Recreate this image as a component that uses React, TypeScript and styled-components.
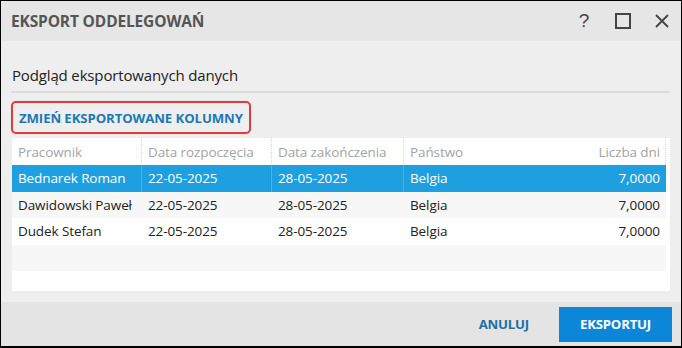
import React, { FC } from "react";
import styled, { createGlobalStyle } from "styled-components";

const GlobalStyle = createGlobalStyle`
  html, body {
    margin: 0;
    padding: 0;
    background: #ffffff;
  }
  * {
    box-sizing: border-box;
  }
`;

type Row = {
  employee: string;
  start: string;
  end: string;
  country: string;
  days: string;
};

const rows: Row[] = [
  { employee: "Bednarek Roman", start: "22-05-2025", end: "28-05-2025", country: "Belgia", days: "7,0000" },
  { employee: "Dawidowski Paweł", start: "22-05-2025", end: "28-05-2025", country: "Belgia", days: "7,0000" },
  { employee: "Dudek Stefan", start: "22-05-2025", end: "28-05-2025", country: "Belgia", days: "7,0000" },
];

const columns = "130px 130px 132px 130px 1fr";

const Window = styled.div`
  width: 682px;
  height: 348px;
  border: 1px solid #000;
  border-bottom-width: 2px;
  display: flex;
  flex-direction: column;
  background: #eeeeee;
  font-family: "Open Sans", "Noto Sans", sans-serif;
`;

const TitleBar = styled.div`
  height: 40px;
  flex-shrink: 0;
  background: #e6e6e6;
  display: flex;
  align-items: center;
  padding: 0 9px 0 10px;
`;

const Title = styled.div`
  flex: 1;
  font-size: 15.5px;
  font-weight: 700;
  color: #555555;
  letter-spacing: -0.15px;
`;

const TitleActions = styled.div`
  display: flex;
  align-items: center;
  gap: 19px;
`;

const TitleButton = styled.button`
  width: 20px;
  height: 20px;
  padding: 0;
  border: none;
  background: transparent;
  display: flex;
  align-items: center;
  justify-content: center;
  color: #444;
  font-family: "Liberation Sans", sans-serif;
  font-size: 19px;
  cursor: pointer;
`;

const Body = styled.div`
  flex: 1;
  padding: 24px 11px 11px 10px;
  display: flex;
  flex-direction: column;
  min-height: 0;
`;

const Subtitle = styled.div`
  font-size: 15px;
  line-height: 20px;
  color: #222;
  letter-spacing: -0.15px;
  padding-left: 1px;
  padding-bottom: 6px;
  border-bottom: 2px solid #dcdcdc;
`;

const ChangeColumns = styled.button`
  align-self: flex-start;
  margin-top: 8px;
  height: 33px;
  padding: 0 6px;
  border: 2px solid #e23a3a;
  border-radius: 5px;
  background: transparent;
  box-shadow: 0 0 1px rgba(120, 0, 0, 0.25);
  font-family: inherit;
  font-size: 13.2px;
  font-weight: 700;
  color: #1b79b5;
  letter-spacing: -0.1px;
  cursor: pointer;
`;

const Table = styled.div`
  margin-top: 4px;
  margin-left: 1px;
  flex: 1;
  min-height: 0;
  overflow: hidden;
  background: #ffffff;
  padding-right: 4px;
  font-size: 13.5px;
  letter-spacing: -0.1px;
`;

const HeaderRow = styled.div`
  display: grid;
  grid-template-columns: ${columns};
  height: 27px;
`;

const HeaderCell = styled.div<{ $right?: boolean; $noLine?: boolean }>`
  display: flex;
  align-items: center;
  justify-content: ${(p) => (p.$right ? "flex-end" : "flex-start")};
  padding: 0 5px 0 6px;
  color: #a3a3a3;
  border-right: 1px dotted ${(p) => (p.$noLine ? "transparent" : "#d6d6d6")};
`;

const DataRow = styled.div<{ $selected?: boolean; $odd?: boolean }>`
  display: grid;
  grid-template-columns: ${columns};
  height: 26.5px;
  background: ${(p) => (p.$selected ? "#1ea0e0" : p.$odd ? "#f7f7f7" : "#ffffff")};
  color: ${(p) => (p.$selected ? "#ffffff" : "#222222")};
`;

const Cell = styled.div<{ $right?: boolean; $line?: boolean }>`
  display: flex;
  align-items: center;
  justify-content: ${(p) => (p.$right ? "flex-end" : "flex-start")};
  padding: 0 5px 0 6px;
  white-space: nowrap;
  border-right: 1px solid ${(p) => (p.$line ? "#4ab3e6" : "transparent")};
`;

const Footer = styled.div`
  height: 44px;
  flex-shrink: 0;
  background: #e4e4e4;
  display: flex;
  align-items: center;
  justify-content: flex-end;
  padding: 0 9px 0 0;
  gap: 30px;
`;

const FooterButton = styled.button<{ $primary?: boolean }>`
  height: 35px;
  min-width: ${(p) => (p.$primary ? "113px" : "auto")};
  padding: 0 ${(p) => (p.$primary ? "14px" : "0")};
  border: none;
  background: ${(p) => (p.$primary ? "#0b86d8" : "transparent")};
  color: ${(p) => (p.$primary ? "#ffffff" : "#1f6fa6")};
  font-family: inherit;
  font-size: 13.2px;
  font-weight: 700;
  letter-spacing: -0.2px;
  cursor: pointer;
`;

const App: FC = () => {
  const blanks = 3;
  return (
    <>
      <GlobalStyle />
      <Window>
        <TitleBar>
          <Title>EKSPORT ODDELEGOWAŃ</Title>
          <TitleActions>
            <TitleButton aria-label="Pomoc">?</TitleButton>
            <TitleButton aria-label="Maksymalizuj">
              <svg width="16" height="16" viewBox="0 0 16 16">
                <rect x="1" y="1" width="14" height="14" fill="none" stroke="#444" strokeWidth="2" />
              </svg>
            </TitleButton>
            <TitleButton aria-label="Zamknij">
              <svg width="16" height="16" viewBox="0 0 16 16">
                <path d="M2 2 L14 14 M14 2 L2 14" stroke="#444" strokeWidth="1.8" />
              </svg>
            </TitleButton>
          </TitleActions>
        </TitleBar>
        <Body>
          <Subtitle>Podgląd eksportowanych danych</Subtitle>
          <ChangeColumns>ZMIEŃ EKSPORTOWANE KOLUMNY</ChangeColumns>
          <Table>
            <HeaderRow>
              <HeaderCell>Pracownik</HeaderCell>
              <HeaderCell>Data rozpoczęcia</HeaderCell>
              <HeaderCell>Data zakończenia</HeaderCell>
              <HeaderCell $noLine>Państwo</HeaderCell>
              <HeaderCell $right>Liczba dni</HeaderCell>
            </HeaderRow>
            {rows.map((r, i) => {
              const sel = i === 0;
              return (
                <DataRow key={r.employee} $selected={sel} $odd={i % 2 === 1}>
                  <Cell $line={sel}>{r.employee}</Cell>
                  <Cell $line={sel}>{r.start}</Cell>
                  <Cell $line={sel}>{r.end}</Cell>
                  <Cell>{r.country}</Cell>
                  <Cell $right>{r.days}</Cell>
                </DataRow>
              );
            })}
            {Array.from({ length: blanks }).map((_, i) => (
              <DataRow key={"blank" + i} $odd={(rows.length + i) % 2 === 1} />
            ))}
          </Table>
        </Body>
        <Footer>
          <FooterButton>ANULUJ</FooterButton>
          <FooterButton $primary>EKSPORTUJ</FooterButton>
        </Footer>
      </Window>
    </>
  );
};

export default App;
